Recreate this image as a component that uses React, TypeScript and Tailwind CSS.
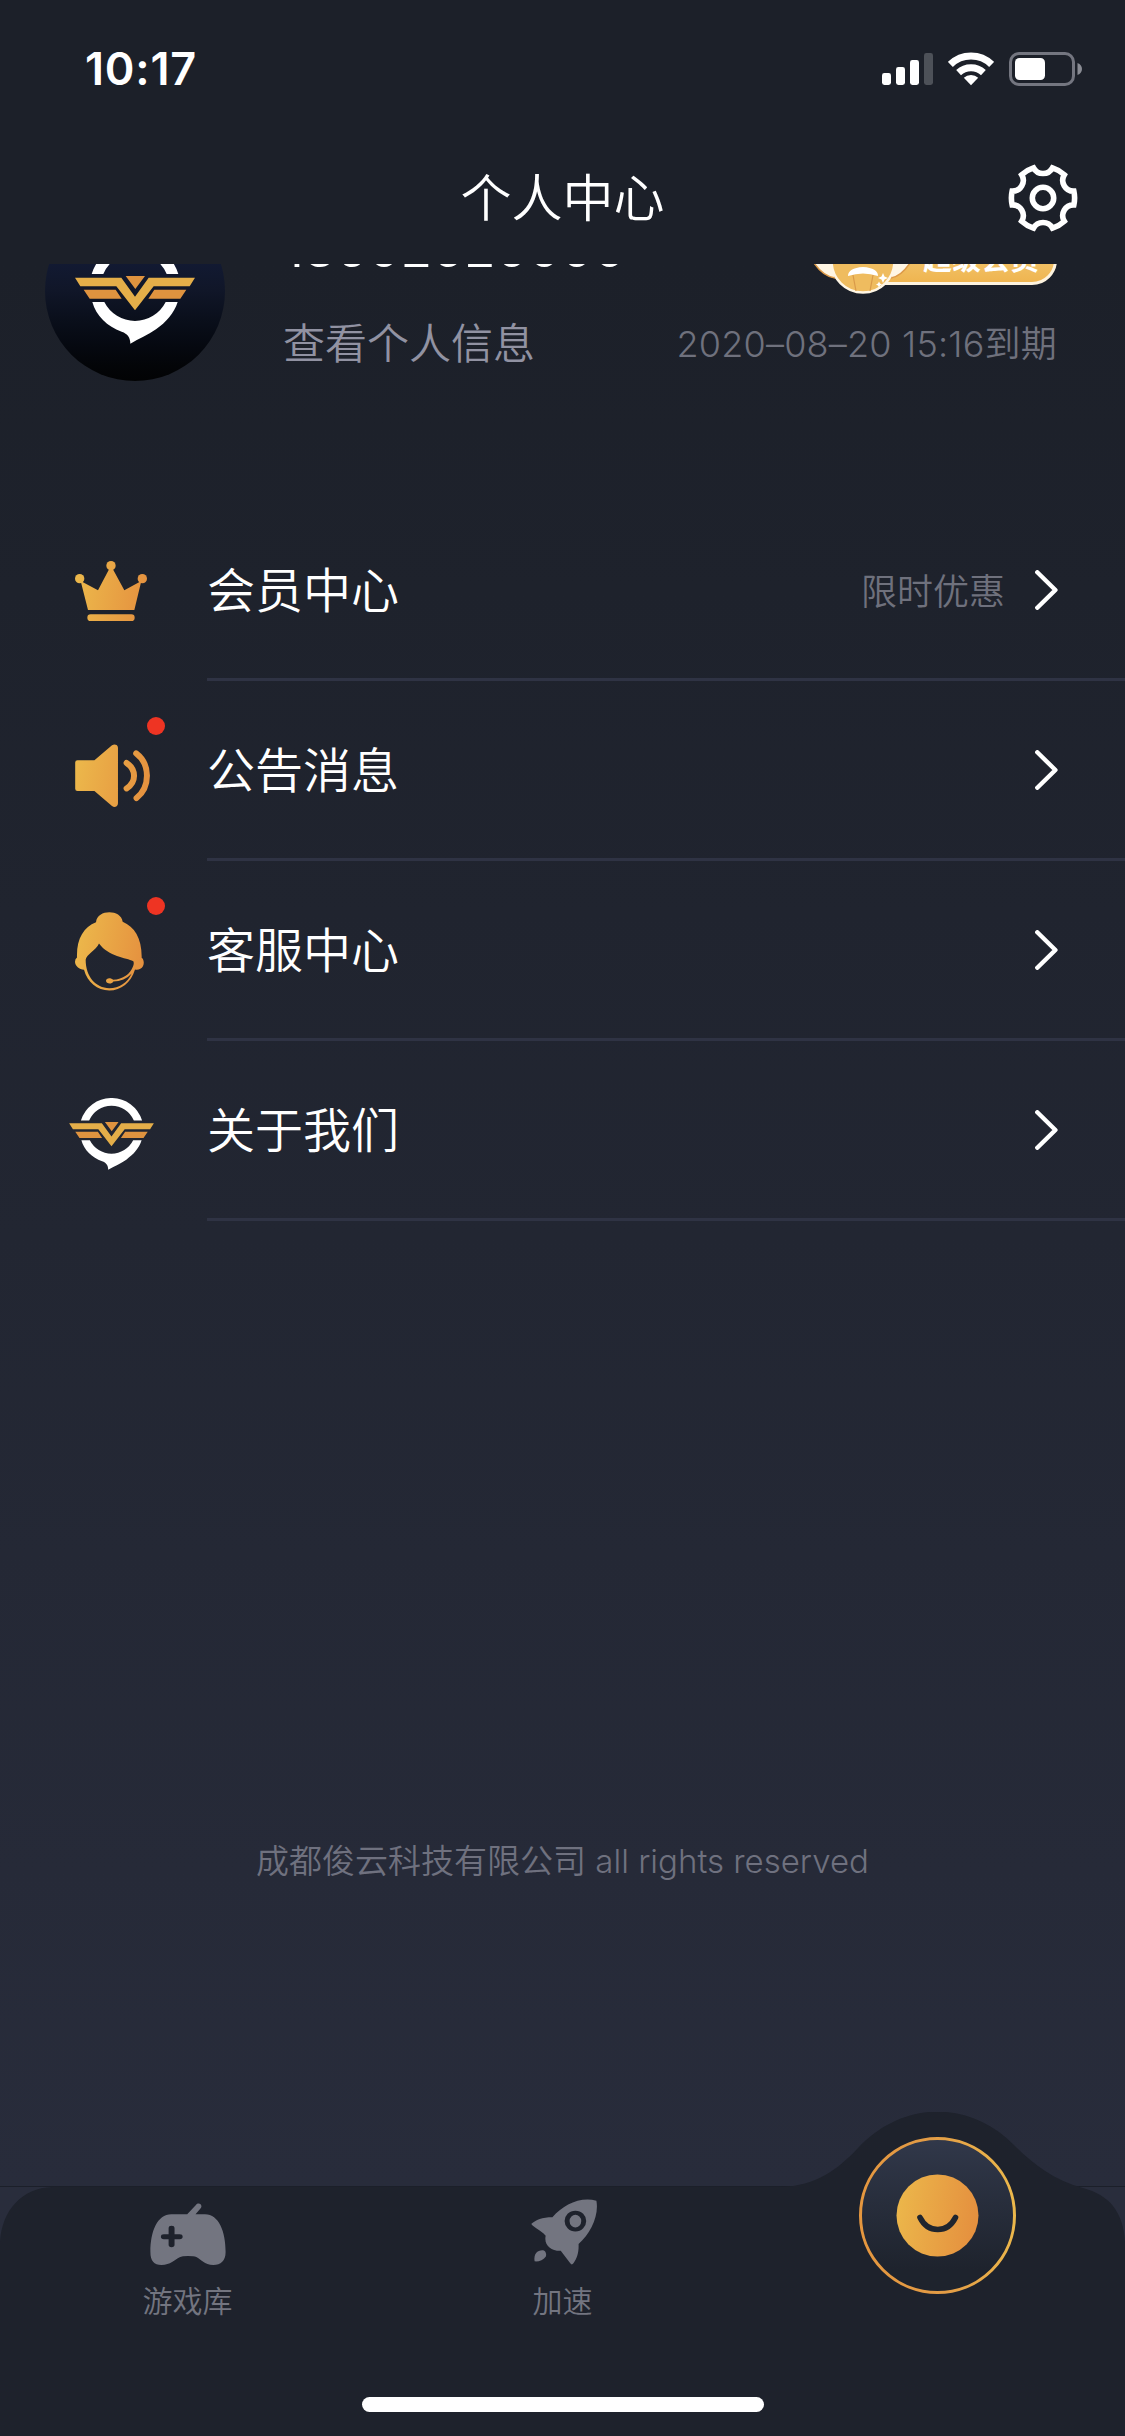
import type { ReactNode } from "react";

// ---- 型別定義 ----
interface MenuItem {
  id: string;
  label: string;
  hint?: string;
  unread?: boolean;
  icon: ReactNode;
}

// ---- 漸層 ----
function GoldGradient({ id }: { id: string }) {
  return (
    <defs>
      <linearGradient id={id} x1="0" y1="0.1" x2="1" y2="0.25">
        <stop offset="0" stopColor="#ecb84b" />
        <stop offset="1" stopColor="#e5913f" />
      </linearGradient>
    </defs>
  );
}

// ---- 圖示 ----
function SignalIcon() {
  return (
    <svg width="51" height="34" viewBox="0 0 51 34" fill="#fff" aria-hidden="true">
      <rect x="0" y="21" width="9" height="12" rx="2.4" />
      <rect x="14" y="15" width="9" height="18" rx="2.4" />
      <rect x="28" y="8" width="9" height="25" rx="2.4" />
      <rect x="42" y="1" width="9" height="32" rx="2.4" opacity="0.22" />
    </svg>
  );
}

function WifiIcon() {
  return (
    <svg width="46" height="34" viewBox="0 0 46 34" fill="none" stroke="#fff" strokeWidth="7" aria-hidden="true">
      <path d="M2.4 12.4A29.5 29.5 0 0 1 43.6 12.4" />
      <path d="M10.6 20.6A18 18 0 0 1 35.4 20.6" />
      <path d="M23 33.2L15.8 25.8A10.4 10.4 0 0 1 30.2 25.8Z" fill="#fff" stroke="none" />
    </svg>
  );
}

function BatteryIcon() {
  return (
    <svg width="73" height="34" viewBox="0 0 73 34" aria-hidden="true">
      <rect x="1.5" y="1.5" width="63" height="31" rx="8.5" fill="none" stroke="#747680" strokeWidth="3" />
      <rect x="6" y="6" width="30" height="22" rx="4.5" fill="#fff" />
      <path d="M68.5 11c6 2 6 10 0 12z" fill="#8a8c94" />
    </svg>
  );
}

// 六齒齒輪：齒頂為外圓弧，齒間為內凹圓弧
function gearPath(): string {
  const R = 31.6;
  const half = 12.5;
  const at = (deg: number) => {
    const a = (deg * Math.PI) / 180;
    return `${(R * Math.cos(a)).toFixed(2)} ${(R * Math.sin(a)).toFixed(2)}`;
  };
  let d = `M${at(-half)}`;
  for (let i = 0; i < 6; i++) {
    const c = i * 60;
    d += `A${R} ${R} 0 0 1 ${at(c + half)}`;
    d += `A10.8 10.8 0 0 0 ${at(c + 60 - half)}`;
  }
  return `${d}Z`;
}

function GearIcon() {
  return (
    <svg width="70" height="70" viewBox="-35 -35 70 70" fill="none" stroke="#fff" strokeWidth="5.6" aria-hidden="true">
      <path d={gearPath()} />
      <circle r="10.7" />
    </svg>
  );
}

function WingLogo({ className }: { className: string }) {
  return (
    <svg className={className} viewBox="165 -24 360 306" aria-hidden="true">
      <g fill="#fff">
        <path d="M215 72A136 136 0 0 1 475 72H440A103 103 0 0 0 250 72Z" />
        <path d="M217 156H253A103 103 0 0 0 437 156H473C462 190 438 217 408 238C383 255 357 266 331 281C331 263 323 251 305 245C262 230 228 197 217 156Z" />
      </g>
      <path d="M165 83H304L345 140L386 83H525L509 109H401L345 181L289 109H181Z" fill="#e4ae49" />
      <path d="M317 78H375L346 117ZM191 119H287L305 146H209ZM403 119H499L481 146H385Z" fill="#df933f" />
    </svg>
  );
}

function CrownIcon() {
  return (
    <svg width="72" height="60" viewBox="75 93 216 180" fill="url(#crown)" aria-hidden="true">
      <defs>
        <linearGradient id="crown" gradientUnits="userSpaceOnUse" x1="75" y1="170" x2="291" y2="200">
          <stop offset="0" stopColor="#ecb84b" />
          <stop offset="1" stopColor="#e5913f" />
        </linearGradient>
      </defs>
      <circle cx="89" cy="146" r="14" />
      <circle cx="183" cy="107" r="14" />
      <circle cx="277" cy="146" r="14" />
      <path d="M92 153L144 181L178 116H188L223 181L274 153L253 240H114Z" />
      <rect x="112" y="253" width="142" height="20" rx="10" />
    </svg>
  );
}

function SpeakerIcon() {
  return (
    <svg width="75" height="63" viewBox="75 641 225 190" aria-hidden="true">
      <defs>
        <linearGradient id="speaker" gradientUnits="userSpaceOnUse" x1="75" y1="700" x2="300" y2="740">
          <stop offset="0" stopColor="#ecb84b" />
          <stop offset="1" stopColor="#e5913f" />
        </linearGradient>
      </defs>
      <path
        d="M82 690H133L186 645Q193 640 200 644Q204 647 204 652V820Q204 826 200 829Q193 833 186 828L133 783H82Q75 783 75 776V697Q75 690 82 690Z"
        fill="url(#speaker)"
      />
      <path
        d="M230 698C260 718 260 756 230 775M259 669C302 702 302 770 260 804"
        fill="none"
        stroke="url(#speaker)"
        strokeWidth="18"
        strokeLinecap="round"
      />
    </svg>
  );
}

function ServiceIcon() {
  return (
    <svg width="69" height="79" viewBox="75 95 207 236" aria-hidden="true">
      <defs>
        <linearGradient id="service" gradientUnits="userSpaceOnUse" x1="75" y1="190" x2="282" y2="230">
          <stop offset="0" stopColor="#ecb84b" />
          <stop offset="1" stopColor="#e5913f" />
        </linearGradient>
      </defs>
      <path
        d="M138 125C142 86 213 86 218 124C254 139 276 175 275 232C284 238 284 259 271 265Q263 269 255 267C243 307 213 330 178 330C142 330 112 306 102 268C88 267 75 257 75 244Q75 235 81 231C79 176 100 140 138 125ZM147 189C138 210 108 222 107 238C107 288 137 323 178 323C208 323 232 307 245 279C231 295 211 303 190 303C185 313 168 310 168 301C168 292 183 291 189 298C220 296 240 281 249 258Q253 249 250 242C228 231 176 229 147 189Z"
        fill="url(#service)"
        fillRule="evenodd"
      />
    </svg>
  );
}

function ChevronIcon() {
  return (
    <svg width="23" height="40" viewBox="0 0 23 40" fill="none" stroke="#fff" strokeWidth="4.4" strokeLinecap="round" strokeLinejoin="round" aria-hidden="true">
      <path d="M2.3 2.3L20.4 20L2.3 37.7" />
    </svg>
  );
}

function GamepadIcon() {
  return (
    <svg width="76" height="62" viewBox="378 128 192 187" preserveAspectRatio="none" aria-hidden="true">
      <path
        d="M432 162H472L494 134C499 126 508 130 508 138Q508 141 506 144L493 162H517C552 162 569 214 569 276C569 303 557 315 538 315C515 315 507 298 495 291Q489 288 474 288Q459 288 453 292C440 300 430 315 407 315C388 315 379 303 379 276C379 214 396 162 432 162Z"
        fill="#737580"
      />
      <path d="M432.5 204V254M413 229.5H453" stroke="#1e222c" strokeWidth="15" strokeLinecap="round" />
    </svg>
  );
}

function RocketIcon() {
  return (
    <svg width="67" height="66" viewBox="1342 116 169 200" preserveAspectRatio="none" fill="#737580" aria-hidden="true">
      <path d="M1507 121C1465 108 1423 134 1396 171C1370 171 1354 179 1343 191C1342 197 1366 211 1379 227C1374 255 1392 274 1417 273L1441 311Q1445 318 1449 311C1458 296 1463 278 1462 252C1492 221 1514 167 1507 121Z" />
      <ellipse cx="1454" cy="183" rx="21" ry="25.5" stroke="#1e222c" strokeWidth="12.5" />
      <path d="M1351 305C1348 281 1359 270 1372 271C1379 272 1382 283 1379 291C1373 302 1362 306 1351 305Z" />
    </svg>
  );
}

function SmileIcon() {
  return (
    <svg width="157" height="157" viewBox="0 0 157 157" aria-hidden="true">
      <GoldGradient id="face" />
      <defs>
        <linearGradient id="ring" x1="0" y1="0.5" x2="1" y2="0.4">
          <stop offset="0" stopColor="#e5973f" />
          <stop offset="0.5" stopColor="#e39c46" />
          <stop offset="1" stopColor="#ecb84b" />
        </linearGradient>
        <linearGradient id="well" x1="0" y1="0" x2="0" y2="1">
          <stop offset="0" stopColor="#31384a" />
          <stop offset="0.85" stopColor="#1e232d" />
        </linearGradient>
      </defs>
      <circle cx="78.5" cy="78.5" r="77" fill="url(#well)" stroke="url(#ring)" strokeWidth="3" />
      <circle cx="78.5" cy="78.5" r="41" fill="url(#face)" />
      <path d="M61 80.5C69 96.5 88.5 96.5 96.5 80.5" fill="none" stroke="#20252e" strokeWidth="5.6" strokeLinecap="round" />
    </svg>
  );
}

// ---- 會員徽章 ----
function VipBadge() {
  return (
    <div className="relative flex h-[50px] w-[226px] items-center justify-end rounded-full border-[3px] border-[#fdf3df] bg-gradient-to-b from-[#f3cd7c] to-[#efb550] pr-[15px]">
      <svg className="absolute -left-[25px] -top-[12px]" width="108" height="70" viewBox="0 0 108 70" aria-hidden="true">
        <path d="M26 52Q12 50 2 32L22 18ZM82 52Q94 50 104 32L82 18Z" fill="#fff6e4" stroke="#dd9a48" strokeWidth="1.5" />
        <circle cx="54" cy="35" r="31.5" fill="#efbc5f" stroke="#fff6e4" strokeWidth="2.5" />
        <path d="M39 50Q39 42 54 41Q69 42 69 50Q54 45 39 50Z" fill="#fff" />
        <path d="M44 49L47 65M64 49L61 65" stroke="#d99a4a" strokeWidth="1.2" />
        <path d="M74 47l1.5 3.5 3.5 1.5-3.5 1.5-1.5 3.5-1.5-3.5-3.5-1.5 3.5-1.5zM70 55.5l1 2 2 1-2 1-1 2-1-2-2-1 2-1z" fill="#fff" />
      </svg>
      <span className="text-[29px] font-bold leading-[40px] text-white">超级会员</span>
    </div>
  );
}

// ---- 選單 ----
const MENU: MenuItem[] = [
  { id: "vip", label: "会员中心", hint: "限时优惠", icon: <CrownIcon /> },
  { id: "notice", label: "公告消息", unread: true, icon: <SpeakerIcon /> },
  { id: "service", label: "客服中心", unread: true, icon: <ServiceIcon /> },
  { id: "about", label: "关于我们", icon: <WingLogo className="h-[72px] w-[85px]" /> },
];

// 各圖示的左緣與垂直位置略有不同
const ICON_OFFSET: Record<string, string> = {
  vip: "pl-[75px]",
  notice: "pl-[75px] pt-[8px]",
  service: "pl-[75px]",
  about: "pl-[69px] pt-[5px]",
};

function MenuRow({ item }: { item: MenuItem }) {
  return (
    <li className="flex h-[180px]">
      <div className={`relative flex w-[207px] items-center ${ICON_OFFSET[item.id]}`}>
        {item.icon}
        {item.unread && (
          <span aria-label="未读" className="absolute left-[147px] top-[36px] h-[18px] w-[18px] rounded-full bg-[#ee3423]" />
        )}
      </div>
      <div className="flex flex-1 items-center border-b-[3px] border-[#2f3344] pr-[67px]">
        <span className="flex-1 pt-[2px] text-[48px] leading-[60px] text-white">{item.label}</span>
        {item.hint && <span className="mr-[30px] pt-[4px] text-[36px] leading-[48px] text-[#6f717d]">{item.hint}</span>}
        <ChevronIcon />
      </div>
    </li>
  );
}

// ---- 底部導覽 ----
function TabBar() {
  return (
    <nav className="relative h-[250px] border-t border-[#1b1f29] bg-[#292d3c]">
      <svg className="absolute left-0 -top-[75px]" width="1125" height="325" viewBox="0 0 1125 325" aria-hidden="true">
        <path
          d="M0 130C2 98 22 76 52 75H780C817 74 838 57 858 36C903 -12 970 -12 1014 33C1032 51 1053 68 1083 76C1109 83 1123 99 1125 130V325H0Z"
          fill="#1e222c"
        />
      </svg>
      <div className="relative grid grid-cols-3 text-[30px] leading-[40px] text-[#737580]">
        <button type="button" className="flex flex-col items-center pt-[16px]">
          <GamepadIcon />
          <span className="mt-[16px]">游戏库</span>
        </button>
        <button type="button" className="flex flex-col items-center pt-[12px]">
          <span className="pl-[3px]">
            <RocketIcon />
          </span>
          <span className="mt-[16px]">加速</span>
        </button>
        <button type="button" aria-label="个人中心" className="-mt-[50px] flex h-[157px] justify-center">
          <SmileIcon />
        </button>
      </div>
      <div className="absolute left-[362px] top-[210px] h-[15px] w-[402px] rounded-full bg-white" />
    </nav>
  );
}

export default function App() {
  return (
    <div className="flex h-[2436px] w-[1125px] flex-col overflow-hidden bg-[#1c2029] font-['Inter','Noto_Sans_CJK_SC',sans-serif] font-[350]">
      {/* ── 狀態列 ── */}
      <div className="flex h-[132px] items-center justify-between pl-[85px] pr-[43px] pt-[6px]">
        <span className="text-[45px] font-semibold leading-[54px] tracking-[0.8px] text-white">10:17</span>
        <div className="flex items-center gap-[15px]">
          <SignalIcon />
          <WifiIcon />
          <BatteryIcon />
        </div>
      </div>

      {/* ── 標題列 ── */}
      <header className="grid h-[132px] grid-cols-[1fr_auto_1fr] items-center pr-[47px]">
        <span />
        <h1 className="pl-[47px] pt-px text-[51px] leading-[64px] text-white">个人中心</h1>
        <button type="button" aria-label="设置" className="justify-self-end">
          <GearIcon />
        </button>
      </header>

      {/* ── 捲動內容 ── */}
      <main className="flex h-[1922px] flex-col overflow-hidden bg-gradient-to-b from-[#1c2029] to-[#282c3b]">
        <section className="-mt-[63px] flex h-[180px] shrink-0 pl-[45px] pr-[68px]">
          <div className="flex h-[180px] w-[180px] justify-center rounded-full bg-gradient-to-b from-[#17224a] via-[#101628] to-[#020304] pt-[41px]">
            <WingLogo className="h-[102px] w-[120px]" />
          </div>
          <div className="flex flex-1 flex-col pl-[58px]">
            <div className="flex h-[84px] shrink-0 items-end justify-between">
              <span className="mb-[5px] text-[51px] font-normal leading-[62px] tracking-[0.4px] text-white">13602620000</span>
              <VipBadge />
            </div>
            <div className="flex h-[116px] shrink-0 items-center justify-between pt-px">
              <span className="text-[42px] leading-[56px] text-[#9192a2]">查看个人信息</span>
              <span className="text-[36px] leading-[48px] tracking-[0.2px] text-[#6f717d]">2020–08–20 15:16到期</span>
            </div>
          </div>
        </section>

        <ul className="mt-[120px]">
          {MENU.map((item) => (
            <MenuRow key={item.id} item={item} />
          ))}
        </ul>

        <p className="mt-[616px] text-center text-[33px] leading-[48px] text-[#6f717f]">
          成都俊云科技有限公司 all rights reserved
        </p>
      </main>

      <TabBar />
    </div>
  );
}
